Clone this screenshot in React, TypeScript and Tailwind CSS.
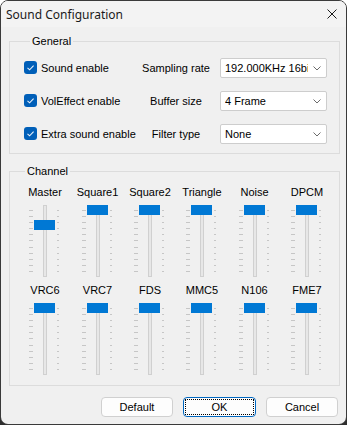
import React from "react";

type Channel = { name: string; pos: number };

const channelRows: Channel[][] = [
  [
    { name: "Master", pos: 15 },
    { name: "Square1", pos: 0 },
    { name: "Square2", pos: 0 },
    { name: "Triangle", pos: 0 },
    { name: "Noise", pos: 0 },
    { name: "DPCM", pos: 0 },
  ],
  [
    { name: "VRC6", pos: 0 },
    { name: "VRC7", pos: 0 },
    { name: "FDS", pos: 0 },
    { name: "MMC5", pos: 0 },
    { name: "N106", pos: 0 },
    { name: "FME7", pos: 0 },
  ],
];

const generalRows = [
  { check: "Sound enable", label: "Sampling rate", value: "192.000KHz 16bit" },
  { check: "VolEffect enable", label: "Buffer size", value: "4 Frame" },
  { check: "Extra sound enable", label: "Filter type", value: "None" },
];

const ticks = Array.from({ length: 11 }, (_, i) => i);

const CheckBox = ({ label }: { label: string }) => (
  <div className="flex items-center gap-[4px]">
    <div className="w-[13px] h-[13px] mb-[2px] rounded-[3px] bg-[#005fb8] flex items-center justify-center">
      <svg width="13" height="13" viewBox="0 0 13 13">
        <polyline points="3.5,6.8 5.6,8.8 9.6,4.6" fill="none" stroke="#e8f1fb" strokeWidth="1.1" />
      </svg>
    </div>
    <span className="whitespace-nowrap">{label}</span>
  </div>
);

const ComboBox = ({ value }: { value: string }) => (
  <div className="ml-[8px] w-[107px] h-[20px] bg-white border border-[#cdcdcd] rounded-[2px] flex items-center pl-[4px] pr-[5px]">
    <span className="w-[83px] overflow-hidden whitespace-nowrap">{value}</span>
    <svg className="ml-auto" width="8" height="5" viewBox="0 0 8 5">
      <polyline points="0.5,0.5 4,4 7.5,0.5" fill="none" stroke="#6b6b6b" strokeWidth="1" />
    </svg>
  </div>
);

const TrackBar = ({ pos }: { pos: number }) => (
  <div className="relative flex justify-between w-[32px] h-[72px] mt-[6px]">
    {/* left ticks */}
    <div className="w-[4px] flex flex-col justify-between py-[5px]">
      {ticks.map((t) => (
        <div key={t} className="h-[1px] w-[4px] bg-[#c6c6c6]" />
      ))}
    </div>
    {/* channel */}
    <div className="w-[4px] h-full bg-[#e7e7e7] border border-[#d0d0d0]" />
    {/* right ticks */}
    <div className="w-[4px] flex flex-col justify-between py-[5px]">
      {ticks.map((t) => (
        <div key={t} className="h-[1px] w-[2px] bg-[#c6c6c6]" />
      ))}
    </div>
    {/* thumb */}
    <div className="absolute left-[5px] w-[21px] h-[10px] bg-[#0078d4]" style={{ top: pos }} />
  </div>
);

const App = () => {
  return (
    <div className="w-[347px] h-[425px] bg-[linear-gradient(to_bottom,#ffffff_50%,#2e2e2e_50%)] font-['Liberation_Sans',Arial,sans-serif] text-[11px] leading-[14px] text-black">
      <div className="h-full flex flex-col border border-[#3a3a3a] rounded-[8px] overflow-hidden">
        {/* ============ title bar ============ */}
        <div className="h-[26px] shrink-0 bg-[#f3f3f3] flex items-center justify-between pl-[5px] pr-[9px]">
          <span className="font-['Segoe_UI','Noto_Sans',sans-serif] text-[12px] text-[#1a1a1a] mt-[1px]">Sound Configuration</span>
          <svg width="10" height="10" viewBox="0 0 10 10">
            <line x1="0.5" y1="0.5" x2="9.5" y2="9.5" stroke="#1a1a1a" strokeWidth="1" />
            <line x1="9.5" y1="0.5" x2="0.5" y2="9.5" stroke="#1a1a1a" strokeWidth="1" />
          </svg>
        </div>

        {/* ============ body ============ */}
        <div className="flex-1 bg-[#f0f0f0] pl-[8px] pr-[6px] flex flex-col">
          {/* ---- General ---- */}
          <fieldset className="mt-[7px] border border-[#dcdcdc] pt-[10px] pb-[9px] pl-[14px]">
            <legend className="ml-[6px] px-[2px]">General</legend>
            <div className="flex flex-col gap-[13px]">
              {generalRows.map((row) => (
                <div key={row.check} className="flex items-center h-[20px]">
                  <div className="w-[116px]">
                    <CheckBox label={row.check} />
                  </div>
                  <span className="w-[72px] text-center whitespace-nowrap">{row.label}</span>
                  <ComboBox value={row.value} />
                </div>
              ))}
            </div>
          </fieldset>

          {/* ---- Channel ---- */}
          <fieldset className="mt-[10px] border border-[#dcdcdc] pt-[7px] pb-[10px] pl-[9px]">
            <legend className="ml-[6px] px-[2px]">Channel</legend>
            <div className="flex flex-col gap-[6px]">
              {channelRows.map((row, i) => (
                <div key={i} className="grid grid-cols-[52px_53px_52px_52px_53px_52px]">
                  {row.map((ch) => (
                    <div key={ch.name} className="flex flex-col items-center">
                      <span className="whitespace-nowrap">{ch.name}</span>
                      <TrackBar pos={ch.pos} />
                    </div>
                  ))}
                </div>
              ))}
            </div>
          </fieldset>

          {/* ---- buttons ---- */}
          <div className="mt-[11px] flex justify-end gap-[10px] pr-[2px]">
            <button className="w-[72px] h-[20px] bg-[#fdfdfd] border border-[#d0d0d0] rounded-[4px]">Default</button>
            <button className="w-[73px] h-[20px] bg-[#fdfdfd] border border-[#0067c0] rounded-[4px] p-[1px]">
              <span className="w-full h-full flex items-center justify-center border border-dotted border-black">OK</span>
            </button>
            <button className="w-[72px] h-[20px] bg-[#fdfdfd] border border-[#d0d0d0] rounded-[4px]">Cancel</button>
          </div>
        </div>
      </div>
    </div>
  );
};

export default App;
